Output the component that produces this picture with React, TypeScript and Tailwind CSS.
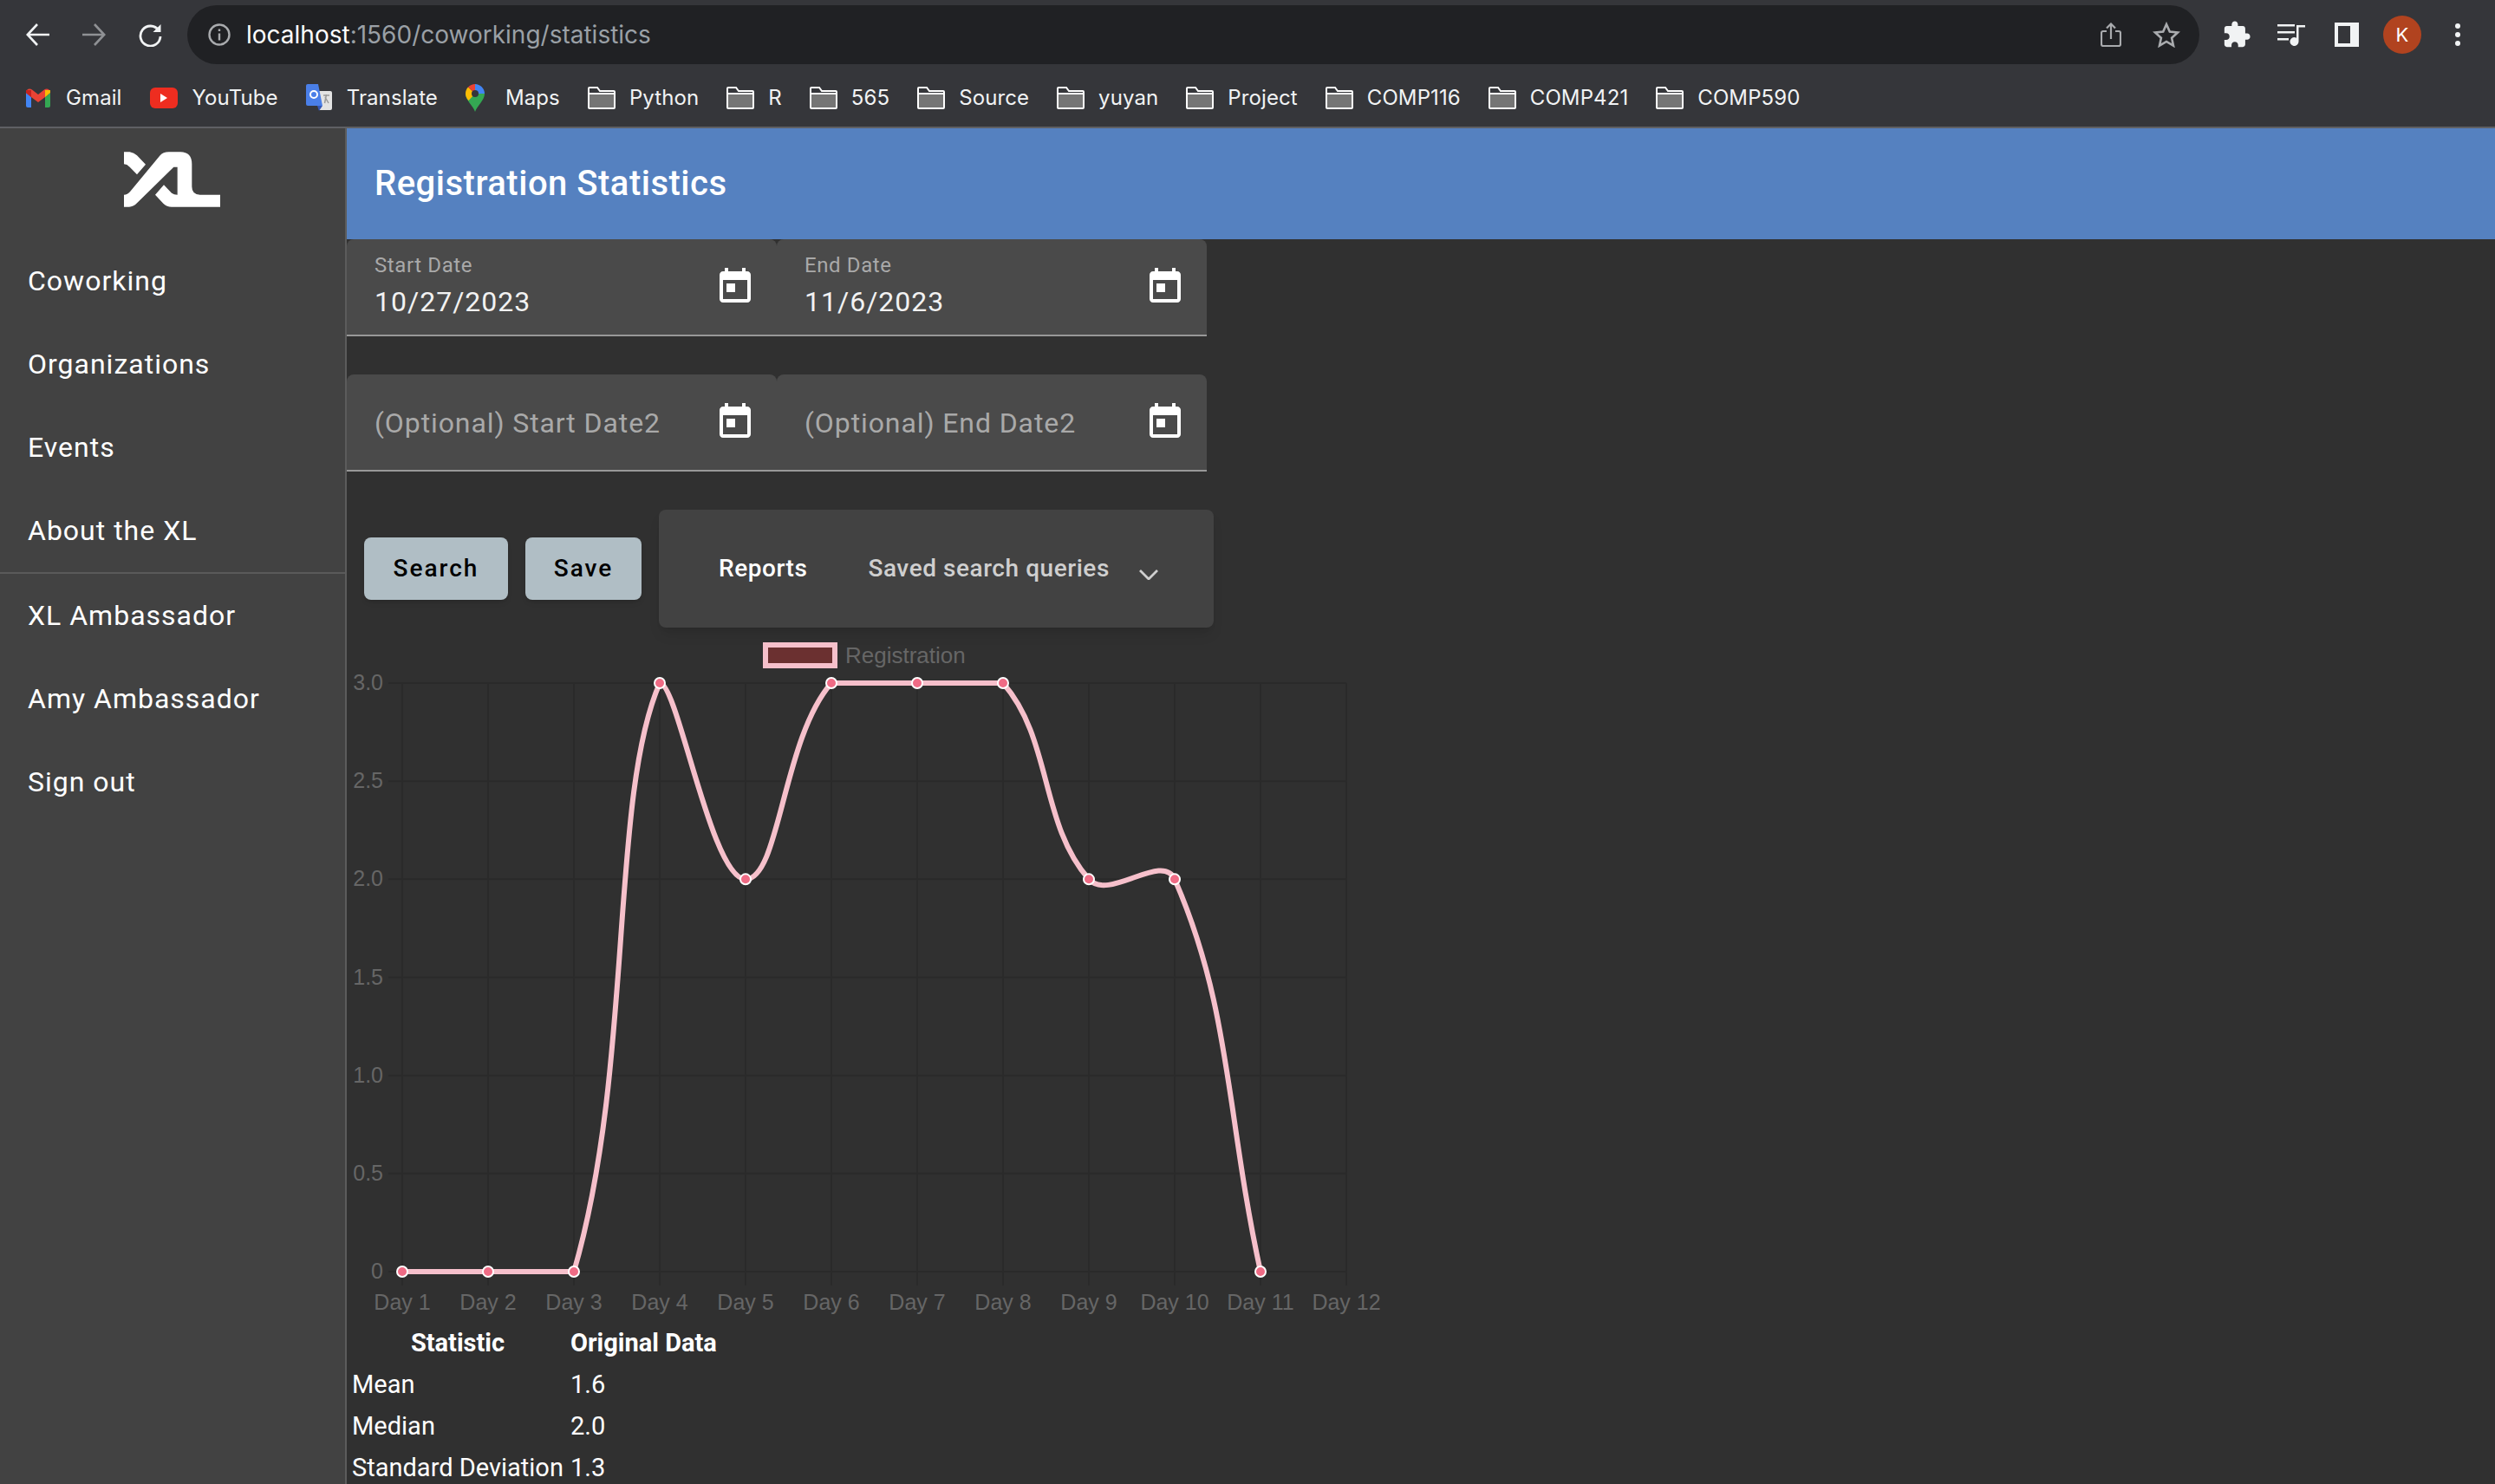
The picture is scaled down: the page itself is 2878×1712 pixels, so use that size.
const bookmarks = ['Python', 'R', '565', 'Source', 'yuyan', 'Project', 'COMP116', 'COMP421', 'COMP590']
const topNav = ['Coworking', 'Organizations', 'Events', 'About the XL']
const bottomNav = ['XL Ambassador', 'Amy Ambassador', 'Sign out']
const days = ['Day 1', 'Day 2', 'Day 3', 'Day 4', 'Day 5', 'Day 6', 'Day 7', 'Day 8', 'Day 9', 'Day 10', 'Day 11', 'Day 12']
const values = [0, 0, 0, 3, 2, 3, 3, 3, 2, 2, 0]
const yTicks = ['3.0', '2.5', '2.0', '1.5', '1.0', '0.5', '0']

// chart geometry, offsets are relative to the svg origin (page x 400, y 724)
const chartLeft = 64
const stepX = 99
const chartTop = 64
const chartBottom = 743
const yFor = (v: number) => chartBottom - (v / 3) * (chartBottom - chartTop)
const xFor = (i: number) => chartLeft + i * stepX

// same spline chart.js uses, tension 0.4 with control points capped to the area
function linePath() {
  const pts = values.map((v, i) => ({ x: xFor(i), y: yFor(v) }))
  const clampY = (y: number) => Math.min(chartBottom, Math.max(chartTop, y))
  const cps = pts.map((p, i) => {
    const prev = pts[i - 1] ?? p
    const next = pts[i + 1] ?? p
    const d01 = Math.hypot(p.x - prev.x, p.y - prev.y)
    const d12 = Math.hypot(next.x - p.x, next.y - p.y)
    const total = d01 + d12 || 1
    const fa = (0.4 * d01) / total
    const fb = (0.4 * d12) / total
    return {
      px: p.x - fa * (next.x - prev.x),
      py: clampY(p.y - fa * (next.y - prev.y)),
      nx: p.x + fb * (next.x - prev.x),
      ny: clampY(p.y + fb * (next.y - prev.y)),
    }
  })
  let d = `M${pts[0].x} ${pts[0].y}`
  for (let i = 1; i < pts.length; i++) {
    d += ` C${cps[i - 1].nx} ${cps[i - 1].ny} ${cps[i].px} ${cps[i].py} ${pts[i].x} ${pts[i].y}`
  }
  return d
}

function Folder() {
  return (
    <svg width="32" height="26" viewBox="0 0 32 26" className="shrink-0">
      <path d="M1 9h30v15a1 1 0 0 1-1 1H2a1 1 0 0 1-1-1z" fill="#757575" />
      <path d="M1 8V2a1 1 0 0 1 1-1h9l3 4h16a1 1 0 0 1 1 1v18a1 1 0 0 1-1 1H2a1 1 0 0 1-1-1V8h30" fill="none" stroke="#fff" strokeWidth="2" />
    </svg>
  )
}

function CalendarIcon() {
  return (
    <svg width="48" height="48" viewBox="0 0 24 24" fill="#fff" className="shrink-0">
      <path d="M19 3h-1V1h-2v2H8V1H6v2H5c-1.11 0-1.99.9-1.99 2L3 19c0 1.1.89 2 2 2h14c1.1 0 2-.9 2-2V5c0-1.1-.9-2-2-2zm0 16H5V8h14v11zM7 10h5v5H7z" />
    </svg>
  )
}

function DateField({ label, value, placeholder }: { label?: string; value?: string; placeholder?: string }) {
  return (
    <div className="flex h-full w-[496px] items-center justify-between rounded-t-lg border-b-2 border-[#989898] bg-[#4a4a4a] pl-8 pr-[24px]">
      {placeholder ? (
        <span className="pt-[2px] text-[32px] tracking-[0.9px] text-[#a9a9a9]">{placeholder}</span>
      ) : (
        <div className="flex flex-col pb-[3px]">
          <span className="text-[24px] leading-[30px] tracking-[0.6px] text-[#a9a9a9]">{label}</span>
          <span className="mt-[7px] text-[32px] leading-[40px] tracking-[1px] text-[#f2f2f2]">{value}</span>
        </div>
      )}
      <CalendarIcon />
    </div>
  )
}

function Toolbar() {
  return (
    <div className="flex h-[74px] items-start pl-[30px] pt-[6px]">
      <div className="flex h-[68px] items-center gap-[38px]">
        <svg width="27" height="26" viewBox="0 0 27 26" fill="none" stroke="#f1f3f4" strokeWidth="2.6"><path d="M27 13H2M13 1 1.8 13 13 25" /></svg>
        <svg width="27" height="26" viewBox="0 0 27 26" fill="none" stroke="#8f9194" strokeWidth="2.6"><path d="M0 13h25M14 1l11.2 12L14 25" /></svg>
        <svg width="27" height="27" viewBox="0 0 27 27" fill="none" stroke="#f1f3f4" strokeWidth="2.8">
          <path d="M23 8a11.5 11.5 0 1 0 2 7" />
          <path d="M25.500 1v9h-9z" fill="#f1f3f4" stroke="none" />
        </svg>
      </div>
      <div className="ml-[29px] flex h-[68px] w-[2321px] items-center rounded-full bg-[#202124] pl-[24px] pr-[22px]">
        <svg width="26" height="26" viewBox="0 0 26 26" fill="none" stroke="#a9abae" strokeWidth="2.4" className="shrink-0">
          <circle cx="13" cy="13" r="11.500" />
          <path d="M13 11.500v8M13 6.500v2.500" />
        </svg>
        <div className="ml-[18px] flex-1 font-[Inter,sans-serif] text-[28px] text-[#9aa0a6]">
          <span className="text-white">localhost</span>:1560/coworking/statistics
        </div>
        <svg width="24" height="28" viewBox="0 0 24 28" fill="none" stroke="#a9abae" strokeWidth="2.2" className="shrink-0">
          <path d="M7 10H3a2 2 0 0 0-2 2v13a2 2 0 0 0 2 2h18a2 2 0 0 0 2-2V12a2 2 0 0 0-2-2h-4M12 19V2M7 6.500 12 1.500l5 5" />
        </svg>
        <svg width="32" height="30" viewBox="0 0 32 30" fill="none" stroke="#a9abae" strokeWidth="2.6" className="ml-[36px] shrink-0">
          <path d="m16 3 3.800 8.500 9.200 1-6.900 6.200 1.900 9L16 23l-8 4.700 1.900-9L3 12.500l9.200-1z" />
        </svg>
      </div>
      <div className="ml-[26px] flex h-[68px] items-center">
        <svg width="34" height="34" viewBox="0 0 24 24" fill="#f1f3f4" className="shrink-0">
          <path d="M20.500 11H19V7c0-1.100-.9-2-2-2h-4V3.500C13 2.120 11.880 1 10.500 1S8 2.120 8 3.500V5H4c-1.100 0-1.990.9-1.990 2v3.800H3.500c1.490 0 2.700 1.210 2.700 2.700s-1.210 2.700-2.700 2.700H2V20c0 1.100.9 2 2 2h3.800v-1.500c0-1.490 1.210-2.700 2.700-2.700 1.490 0 2.700 1.210 2.700 2.700V22H17c1.100 0 2-.9 2-2v-4h1.500c1.380 0 2.500-1.120 2.500-2.500S21.880 11 20.500 11z" />
        </svg>
        <svg width="32" height="26" viewBox="0 0 32 26" fill="#f1f3f4" className="ml-[30px] shrink-0">
          <path d="M0 1h20v2.500H0zM0 9h20v2.500H0zM0 17h13v2.500H0z" />
          <path d="M22 2h10v2.500h-7.500V21a5 5 0 1 1-2.500-4.300z" />
        </svg>
        <div className="ml-[34px] h-[28px] w-[28px] shrink-0 border-[4px] border-r-[10px] border-[#f1f3f4]" />
        <div className="ml-[28px] flex h-[44px] w-[44px] shrink-0 items-center justify-center rounded-full bg-[#b1431f] font-[Inter,sans-serif] text-[22px] text-white">K</div>
        <div className="ml-[39px] flex shrink-0 flex-col gap-[4px]">
          <span className="h-[6px] w-[6px] rounded-full bg-[#f1f3f4]" />
          <span className="h-[6px] w-[6px] rounded-full bg-[#f1f3f4]" />
          <span className="h-[6px] w-[6px] rounded-full bg-[#f1f3f4]" />
        </div>
      </div>
    </div>
  )
}

function BookmarksBar() {
  const label = 'font-[Inter,sans-serif] text-[24px] tracking-[0.1px] text-[#f1f3f4]'
  return (
    <div className="flex h-[74px] items-center gap-[32px] border-b-2 border-[#5f6064] pl-[30px] pt-[6px]">
      <div className="flex items-center gap-[18px]">
        <svg width="28" height="24" viewBox="0 0 28 24" className="shrink-0">
          <path d="M0 6v15a2 2 0 0 0 2 2h4V11z" fill="#4285f4" />
          <path d="M22 11v12h4a2 2 0 0 0 2-2V6z" fill="#34a853" />
          <path d="M0 6c0-4 4-6 7-3.500L14 8l7-5.500C24 0 28 2 28 6l-6 5-8 6-8-6z" fill="#ea4335" />
          <path d="M22 11V3l6 0v3z" fill="#fbbc04" />
          <path d="M0 6V3l6 0v8z" fill="#c5221f" />
        </svg>
        <span className={label}>Gmail</span>
      </div>
      <div className="flex items-center gap-[17px]">
        <div className="flex h-[24px] w-[32px] shrink-0 items-center justify-center rounded-[6px] bg-[#ee2d20]">
          <svg width="8" height="10" viewBox="0 0 8 10" fill="#fff"><path d="M0 0l8 5-8 5z" /></svg>
        </div>
        <span className={label}>YouTube</span>
      </div>
      <div className="flex items-center gap-[17px]">
        <svg width="30" height="32" viewBox="0 0 30 32" className="shrink-0">
          <path d="M14 8h14a2 2 0 0 1 2 2v18a2 2 0 0 1-2 2H15z" fill="#e3e3e3" />
          <path d="M2 0h12l5 25H2a2 2 0 0 1-2-2V2a2 2 0 0 1 2-2z" fill="#4a7fe8" />
          <path d="M13 25h6l-4 6z" fill="#3557b5" />
          <circle cx="9" cy="12" r="4" fill="none" stroke="#fff" strokeWidth="2" />
          <path d="M20 13h7M23.500 12l-2 10M22 15l4 7" stroke="#9a9a9a" strokeWidth="1.500" fill="none" />
        </svg>
        <span className={label}>Translate</span>
      </div>
      <div className="flex items-center gap-[24px]">
        <svg width="22" height="32" viewBox="0 0 22 32" className="shrink-0">
          <path d="M11 32C9 25 0 19 0 11h22c0 8-9 14-11 21z" fill="#34a853" />
          <path d="M0 11c0-3 1-5.500 3-7.500l8 7.500-7.500 8C1 16 0 14 0 11z" fill="#fbbc04" />
          <path d="M3 3.500C5 1.300 8 0 11 0l3 7-3 4z" fill="#ea4335" />
          <path d="M11 0c6 0 11 5 11 11H11z" fill="#4285f4" />
          <circle cx="11" cy="11" r="4" fill="#35363a" />
        </svg>
        <span className={label}>Maps</span>
      </div>
      {bookmarks.map((name) => (
        <div key={name} className="flex items-center gap-[16px]">
          <Folder />
          <span className={label}>{name}</span>
        </div>
      ))}
    </div>
  )
}

function Sidebar() {
  const item = 'flex h-[96px] items-center pl-8 text-[32px] tracking-[1px] text-white'
  return (
    <aside className="w-[400px] shrink-0 border-r-2 border-[#5c5c5c] bg-[#424242] font-[Roboto,sans-serif]">
      <div className="h-[128px] pl-[143px] pt-[27px]">
        <svg width="111" height="64" viewBox="40 30 333 190" fill="#fff">
          <path d="M40 30H60Q75 33 85 42L115 73 85 108 60 82Q50 72 40 72Z" />
          <path d="M40 178Q52 178 62 166L165 42Q175 30 195 30H235Q275 30 275 72V150Q275 178 303 178H373V220H205Q188 220 176 208L148 178 178 144 205 172Q213 178 225 178V82H212L85 207Q72 220 58 220H40Z" />
        </svg>
      </div>
      {topNav.map((name) => (
        <div key={name} className={item}>{name}</div>
      ))}
      <div className="h-[2px] bg-[#5a5a5a]" />
      {bottomNav.map((name) => (
        <div key={name} className={item}>{name}</div>
      ))}
    </aside>
  )
}

function Chart() {
  return (
    <svg width="1240" height="800" className="block font-['Liberation_Sans',sans-serif]">
      <rect x="483" y="20" width="80" height="24" fill="#6b3030" stroke="#f6c0cb" strokeWidth="6" />
      <text x="575" y="41" fontSize="26" fill="#666">Registration</text>
      {yTicks.map((tick, i) => {
        const y = chartTop + (i * (chartBottom - chartTop)) / 6
        return (
          <g key={tick}>
            <line x1={chartLeft - 16} x2={chartLeft + 11 * stepX} y1={y} y2={y} stroke="#2a2a2a" strokeWidth="2" />
            <text x={chartLeft - 22} y={y + 8} fontSize="25" textAnchor="end" fill="#666">{tick}</text>
          </g>
        )
      })}
      {days.map((day, i) => (
        <g key={day}>
          <line x1={xFor(i)} x2={xFor(i)} y1={chartTop} y2={chartBottom + 16} stroke="#2a2a2a" strokeWidth="2" />
          <text x={xFor(i)} y={chartBottom + 44} fontSize="25" textAnchor="middle" fill="#666">{day}</text>
        </g>
      ))}
      <path d={linePath()} fill="none" stroke="#f6c0cb" strokeWidth="6" />
      {values.map((v, i) => (
        <circle key={i} cx={xFor(i)} cy={yFor(v)} r="6" fill="#ef6b85" stroke="#fff" strokeWidth="2" />
      ))}
    </svg>
  )
}

function StatsTable() {
  const rows = [
    ['Mean', '1.6'],
    ['Median', '2.0'],
    ['Standard Deviation', '1.3'],
  ]
  return (
    <table className="border-separate border-spacing-[4px] font-[Roboto,sans-serif] text-[29px] text-white">
      <thead>
        <tr className="h-[44px]">
          <th className="px-[2px] text-center font-bold">Statistic</th>
          <th className="px-[2px] text-left font-bold">Original Data</th>
        </tr>
      </thead>
      <tbody>
        {rows.map(([name, value]) => (
          <tr key={name} className="h-[44px]">
            <td className="px-[2px]">{name}</td>
            <td className="px-[2px]">{value}</td>
          </tr>
        ))}
      </tbody>
    </table>
  )
}

export default function App() {
  return (
    <div className="flex h-screen flex-col overflow-hidden bg-[#303030]">
      <div className="shrink-0 bg-[#35363a]">
        <Toolbar />
        <BookmarksBar />
      </div>
      <div className="flex min-h-0 flex-1">
        <Sidebar />
        <main className="min-w-0 flex-1 font-[Roboto,sans-serif]">
          <div className="flex h-[128px] items-center bg-[#5581c0] pl-8 text-[40px] font-medium tracking-[0.5px] text-white">
            Registration Statistics
          </div>
          <div className="flex h-[112px] w-[992px]">
            <DateField label="Start Date" value="10/27/2023" />
            <DateField label="End Date" value="11/6/2023" />
          </div>
          <div className="mt-[44px] flex h-[112px] w-[992px]">
            <DateField placeholder="(Optional) Start Date2" />
            <DateField placeholder="(Optional) End Date2" />
          </div>
          <div className="mt-[44px] flex h-[136px] items-center pl-5">
            <button className="h-[72px] w-[166px] rounded-lg bg-[#b0bec5] text-[28px] font-medium tracking-[2px] text-black shadow-md">Search</button>
            <button className="ml-5 h-[72px] w-[134px] rounded-lg bg-[#b0bec5] text-[28px] font-medium tracking-[2px] text-black shadow-md">Save</button>
            <div className="ml-5 flex h-[136px] w-[640px] items-center rounded-lg bg-[#424242] pl-[69px] text-[28px] font-medium tracking-[0.55px] shadow-lg">
              <span className="text-white">Reports</span>
              <span className="ml-[70px] text-[#cfcfcf]">Saved search queries</span>
              <svg width="22" height="12" viewBox="0 0 22 12" fill="none" stroke="#cfcfcf" strokeWidth="2.800" className="ml-[34px] mt-[14px]"><path d="M1 1l10 10L21 1" /></svg>
            </div>
          </div>
          <Chart />
          <StatsTable />
        </main>
      </div>
    </div>
  )
}
